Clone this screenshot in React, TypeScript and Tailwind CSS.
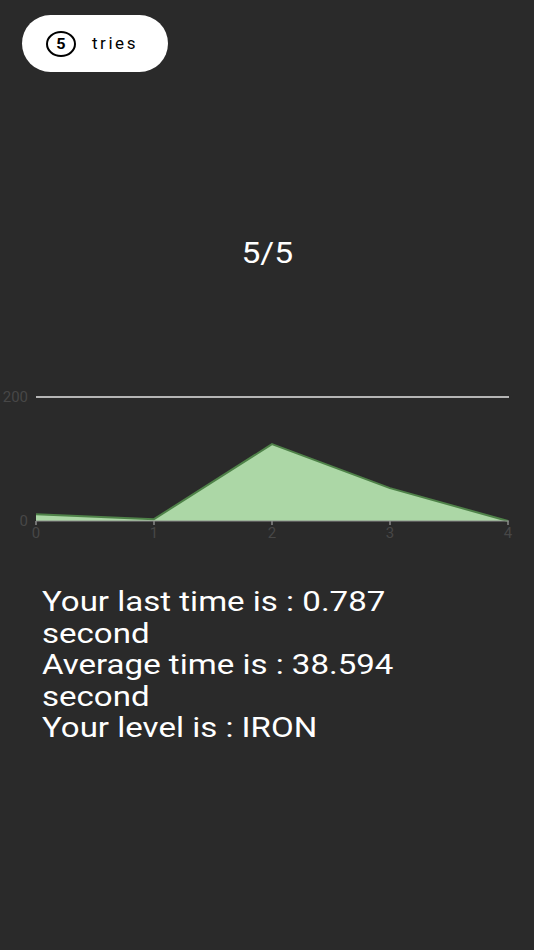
import React from "react";

// ─── Data ────────────────────────────────────────────────────────────────────

const times = [11, 3, 124, 53, 0]; // chart values, 0..200 scale

const X0 = 36;
const STEP = 118;
const TOP = 17; // y of 200
const BASE = 141; // y of 0

function px(i: number) {
  return X0 + i * STEP;
}
function py(v: number) {
  return BASE - (v / 200) * (BASE - TOP);
}

// ─── Chart ───────────────────────────────────────────────────────────────────

function TimeChart() {
  const pts = times.map((v, i) => `${px(i)},${py(v)}`).join(" ");
  const area = `${px(0)},${BASE} ${pts} ${px(times.length - 1)},${BASE}`;

  return (
    <svg width="534" height="165" viewBox="0 0 534 165" className="block">
      {/* 200 grid line */}
      <line x1={X0} y1={TOP} x2={509} y2={TOP} stroke="#e5e5e5" strokeWidth="1.5" />
      <text x="28" y={TOP + 5} textAnchor="end" fontSize="15" fill="#474747" fontFamily="Roboto, sans-serif">
        200
      </text>
      <text x="28" y={BASE + 5} textAnchor="end" fontSize="15" fill="#474747" fontFamily="Roboto, sans-serif">
        0
      </text>

      {/* area */}
      <polygon points={area} fill="#acd7a6" />
      <polyline points={pts} fill="none" stroke="#4f8249" strokeWidth="2" strokeLinejoin="round" />

      {/* x axis */}
      <line x1={X0} y1={BASE} x2={509} y2={BASE} stroke="#8a8a8a" strokeWidth="1" />
      {times.map((_, i) => (
        <g key={i}>
          <line x1={px(i)} y1={BASE} x2={px(i)} y2={BASE + 4} stroke="#8a8a8a" strokeWidth="1.5" />
          <text
            x={px(i)}
            y={BASE + 17}
            textAnchor="middle"
            fontSize="15"
            fill="#474747"
            fontFamily="Roboto, sans-serif"
          >
            {i}
          </text>
        </g>
      ))}
    </svg>
  );
}

// ─── Page ────────────────────────────────────────────────────────────────────

export default function App() {
  return (
    <div className="w-full h-[950px] bg-[#2a2a2a] font-['Roboto',sans-serif] overflow-hidden">
      {/* tries pill */}
      <div className="ml-[22px] pt-[15px]">
        <div className="h-[57px] w-[146px] rounded-full bg-white flex items-center pl-[24px] gap-[16px]">
          <div className="w-[30px] h-[26px] rounded-[50%] border-[2.5px] border-black flex items-center justify-center text-[14px] font-bold text-black leading-none">
            <span className="inline-block scale-x-[1.16]">5</span>
          </div>
          <span className="text-[17px] tracking-[0.15em] text-black">tries</span>
        </div>
      </div>

      {/* score */}
      <div className="mt-[163px] text-center text-white text-[29px] leading-[36px]">
        <span className="inline-block scale-x-[1.16]">5/5</span>
      </div>

      {/* chart */}
      <div className="mt-[109px]">
        <TimeChart />
      </div>

      {/* stats */}
      <div className="ml-[42px] mt-[41px] w-[340px] origin-left scale-x-[1.18] text-white text-[28px] leading-[31.5px]">
        Your last time is : 0.787 second
        <br />
        Average time is : 38.594 second
        <br />
        Your level is : IRON
      </div>
    </div>
  );
}
